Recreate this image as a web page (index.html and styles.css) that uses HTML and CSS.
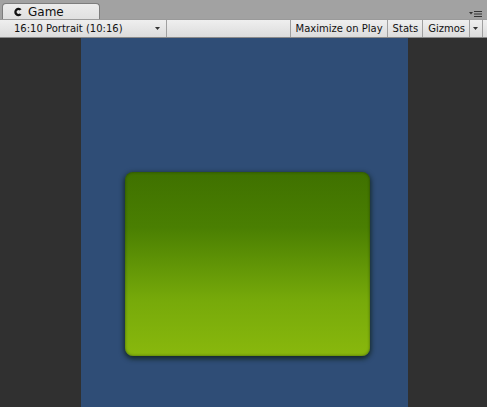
FILE: index.html
```html
<!DOCTYPE html>
<html>
<head>
<meta charset="utf-8">
<link rel="stylesheet" href="styles.css">
</head>
<body>
<div class="window">
  <div class="tabbar">
    <div class="tab">
      <svg class="tab-icon" width="10" height="10" viewBox="0 0 10 10"><path d="M8.6 2.2 A4.2 4.2 0 1 0 8.6 7.8 L6.6 6.4 A1.8 1.8 0 1 1 6.6 3.6 Z" fill="#111"/></svg>
      <span>Game</span>
    </div>
    <div class="tabmenu">
      <svg width="16" height="8" viewBox="0 0 16 8"><path d="M1 2h4l-2 2.5z" fill="#333"/><rect x="6" y="1" width="8" height="1" fill="#333"/><rect x="6" y="3.5" width="8" height="1" fill="#333"/><rect x="6" y="6" width="8" height="1" fill="#333"/></svg>
    </div>
  </div>
  <div class="toolbar">
    <div class="dropdown">
      <span>16:10 Portrait (10:16)</span>
      <svg class="arrow" width="6" height="4" viewBox="0 0 6 4"><path d="M0 0h5l-2.5 3z" fill="#333"/></svg>
    </div>
    <div class="spacer"></div>
    <div class="btn">Maximize on Play</div>
    <div class="btn">Stats</div>
    <div class="btn gizmos">Gizmos</div>
    <div class="btn drop">
      <svg width="6" height="4" viewBox="0 0 6 4"><path d="M0 0h5l-2.5 3z" fill="#333"/></svg>
    </div>
  </div>
  <div class="gameview">
    <div class="screen">
      <div class="panel"></div>
    </div>
  </div>
</div>
</body>
</html>
```
FILE: styles.css
```css
html, body {
  margin: 0;
  padding: 0;
}
body {
  background: #a2a2a2;
  font-family: "DejaVu Sans", "Liberation Sans", sans-serif;
  font-size: 10px;
  color: #111;
}
.window {
  width: 487px;
  height: 407px;
  display: flex;
  flex-direction: column;
  overflow: hidden;
}
.tabbar {
  height: 19px;
  display: flex;
  align-items: flex-end;
  justify-content: space-between;
  padding-left: 2px;
  box-sizing: border-box;
}
.tab {
  width: 98px;
  height: 16px;
  box-sizing: border-box;
  background: linear-gradient(#ececec, #e0e0e0);
  border: 1px solid #7d7d7d;
  border-bottom: none;
  border-radius: 4px 4px 0 0;
  display: flex;
  align-items: center;
  gap: 5px;
  padding-left: 10px;
  font-size: 12px;
  font-family: "DejaVu Sans", sans-serif;
}
.tab-icon {
  flex: none;
}
.tabmenu {
  align-self: flex-start;
  margin-top: 10px;
  margin-right: 3px;
  height: 8px;
}
.tabmenu svg {
  display: block;
}
.toolbar {
  height: 17px;
  display: flex;
  align-items: stretch;
  background: linear-gradient(#efefef, #dcdcdc);
  border-top: 1px solid #9a9a9a;
  border-bottom: 1px solid #8a8a8a;
}
.dropdown {
  width: 162px;
  margin-left: 5px;
  border-right: 1px solid #a0a0a0;
  display: flex;
  align-items: center;
  justify-content: space-between;
  padding: 0 5px 0 9px;
  box-sizing: border-box;
}
.arrow {
  display: block;
}
.spacer {
  flex: 1;
  border-right: 1px solid #a0a0a0;
}
.btn {
  display: flex;
  align-items: center;
  padding: 0 4px 0 5px;
  border-right: 1px solid #a0a0a0;
}
.btn.drop {
  padding: 0 3px;
  margin-right: 4px;
}
.btn.drop svg {
  display: block;
}
.gameview {
  flex: 1;
  background: #303030;
  display: flex;
  padding-left: 81px;
}
.screen {
  width: 327px;
  background: #2f4d76;
  padding: 134px 0 0 44px;
  box-sizing: border-box;
}
.panel {
  width: 245px;
  height: 184px;
  border-radius: 8px;
  background: linear-gradient(#3f7100 0%, #4a7f02 30%, #77aa0a 70%, #89b80d 100%);
  box-shadow: inset 0 0 3px rgba(20, 40, 0, 0.6), 0 2px 5px 1px rgba(10, 25, 10, 0.7);
}
```
